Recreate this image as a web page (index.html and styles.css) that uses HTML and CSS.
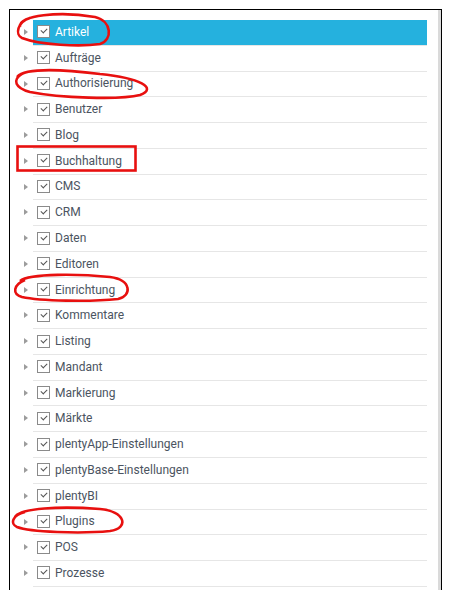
FILE: index.html
```html
<!DOCTYPE html>
<html>
<head>
<link rel="stylesheet" href="styles.css">
</head>
<body>
<div class="frame">
    <ul class="tree">
        <li class="item"><span class="toggle"></span><div class="node active"><span class="check"></span><span class="label">Artikel</span></div></li>
        <li class="item"><span class="toggle"></span><div class="node"><span class="check"></span><span class="label">Aufträge</span></div></li>
        <li class="item"><span class="toggle"></span><div class="node"><span class="check"></span><span class="label">Authorisierung</span></div></li>
        <li class="item"><span class="toggle"></span><div class="node"><span class="check"></span><span class="label">Benutzer</span></div></li>
        <li class="item"><span class="toggle"></span><div class="node"><span class="check"></span><span class="label">Blog</span></div></li>
        <li class="item"><span class="toggle"></span><div class="node"><span class="check"></span><span class="label">Buchhaltung</span></div></li>
        <li class="item"><span class="toggle"></span><div class="node"><span class="check"></span><span class="label">CMS</span></div></li>
        <li class="item"><span class="toggle"></span><div class="node"><span class="check"></span><span class="label">CRM</span></div></li>
        <li class="item"><span class="toggle"></span><div class="node"><span class="check"></span><span class="label">Daten</span></div></li>
        <li class="item"><span class="toggle"></span><div class="node"><span class="check"></span><span class="label">Editoren</span></div></li>
        <li class="item"><span class="toggle"></span><div class="node"><span class="check"></span><span class="label">Einrichtung</span></div></li>
        <li class="item"><span class="toggle"></span><div class="node"><span class="check"></span><span class="label">Kommentare</span></div></li>
        <li class="item"><span class="toggle"></span><div class="node"><span class="check"></span><span class="label">Listing</span></div></li>
        <li class="item"><span class="toggle"></span><div class="node"><span class="check"></span><span class="label">Mandant</span></div></li>
        <li class="item"><span class="toggle"></span><div class="node"><span class="check"></span><span class="label">Markierung</span></div></li>
        <li class="item"><span class="toggle"></span><div class="node"><span class="check"></span><span class="label">Märkte</span></div></li>
        <li class="item"><span class="toggle"></span><div class="node"><span class="check"></span><span class="label">plentyApp-Einstellungen</span></div></li>
        <li class="item"><span class="toggle"></span><div class="node"><span class="check"></span><span class="label">plentyBase-Einstellungen</span></div></li>
        <li class="item"><span class="toggle"></span><div class="node"><span class="check"></span><span class="label">plentyBI</span></div></li>
        <li class="item"><span class="toggle"></span><div class="node"><span class="check"></span><span class="label">Plugins</span></div></li>
        <li class="item"><span class="toggle"></span><div class="node"><span class="check"></span><span class="label">POS</span></div></li>
        <li class="item"><span class="toggle"></span><div class="node"><span class="check"></span><span class="label">Prozesse</span></div></li>
    </ul>
    <div class="scrollbar"></div>
</div>

<!-- hand drawn markers on top of the screenshot -->
<svg class="marks" width="451" height="605" viewBox="0 0 451 605">
    <path d="M20 27 C18 15, 60 11, 95 17 C112 21, 113 40, 100 44 C80 47, 40 45, 22 38 C15 35, 17 22, 30 18"/>
    <path d="M17 77 C25 68, 60 69, 100 74 C140 78, 158 88, 140 95 C120 100, 60 98, 30 92 C15 88, 12 80, 22 74"/>
    <rect x="17.5" y="146.5" width="118" height="24"/>
    <path d="M20 281 C30 273, 80 274, 110 277 C132 280, 132 296, 118 299 C90 302, 40 301, 22 297 C12 294, 13 285, 25 280"/>
    <path d="M15 517 C20 508, 60 506, 100 509 C125 511, 130 528, 110 531 C80 534, 30 532, 17 527 C10 524, 12 515, 25 512"/>
</svg>
</body>
</html>
```

FILE: styles.css
```css
body {
  margin: 0;
  background: #fff;
  font-family: Roboto, "Liberation Sans", sans-serif;
}

.frame {
  display: flex;
  margin: 9px 0 0 9px;
  width: 431px;
  height: 580px;
  border: 1px solid #000;
  border-bottom: none;
  overflow: hidden;
}

.tree {
  flex: 1;
  list-style: none;
  margin: 0;
  padding: 10px 11px 0 13px;
}

.item {
  display: flex;
  align-items: stretch;
  height: 25.78px;
}

.toggle {
  width: 10px;
  position: relative;
}

.toggle::before {
  content: "";
  position: absolute;
  left: 1px;
  top: 9px;
  border-left: 4px solid #9c9c9c;
  border-top: 3.5px solid transparent;
  border-bottom: 3.5px solid transparent;
}

.node {
  flex: 1;
  display: flex;
  align-items: center;
  gap: 5px;
  padding: 0 0 1px 4px;
  border-bottom: 1px solid #e6e6e6;
  font-size: 12px;
  color: #4b5461;
}

.node.active {
  background: #25b1de;
  color: #fff;
}

.check {
  width: 11px;
  height: 11px;
  border: 1px solid #8a8a8a;
  background: #fff;
  position: relative;
  flex: none;
}

.check::after {
  content: "";
  position: absolute;
  left: 3px;
  top: 2px;
  width: 5px;
  height: 3px;
  border-left: 1px solid #555;
  border-bottom: 1px solid #555;
  transform: rotate(-45deg);
}

.scrollbar {
  width: 3px;
  background: #dadada;
}

.marks {
  position: absolute;
  left: 0;
  top: 0;
  pointer-events: none;
}

.marks path,
.marks rect {
  fill: none;
  stroke: #e8100f;
  stroke-width: 2.6;
}
```
